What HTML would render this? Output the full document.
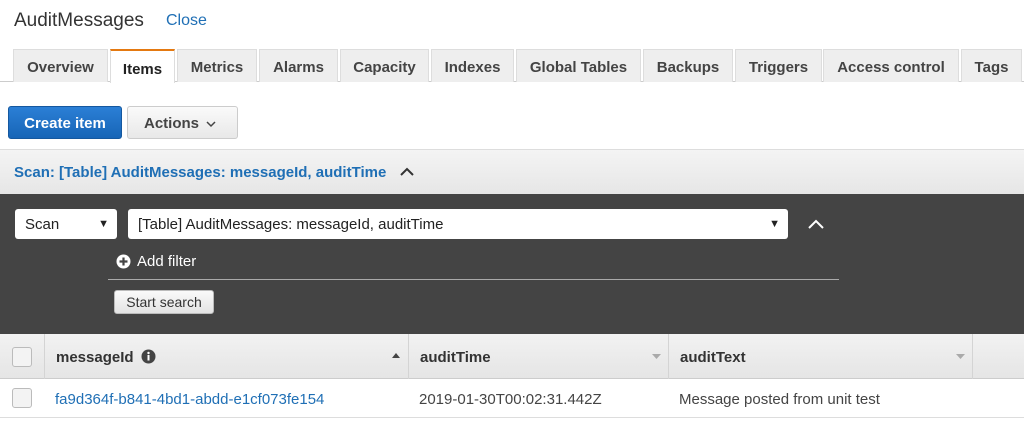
<!DOCTYPE html>
<html><head><style>
*{box-sizing:border-box;margin:0;padding:0}
body{width:1024px;height:440px;overflow:hidden;background:#fff;font-family:"Liberation Sans",Arial,sans-serif;position:relative;color:#333}
.a{position:absolute}
.tab{position:absolute;top:49px;height:33px;background:#eee;border:1px solid #ddd;border-bottom:none;font-weight:bold;font-size:15px;color:#444;text-align:center;line-height:35px}
.cb{position:absolute;width:20px;height:20px;border:1px solid #bbb;border-radius:3px;background:#f3f3f3}
</style></head><body>
<div class="a" style="left:14px;top:10px;font-size:19px;color:#333">AuditMessages</div>
<div class="a" style="left:166px;top:12px;font-size:16px;color:#1f6fb5">Close</div>
<div class="a" style="left:0;top:81px;width:1024px;height:1px;background:#ccc"></div>
<div class="tab" style="left:13px;width:95px">Overview</div>
<div class="tab" style="left:110px;width:65px;height:34px;background:#fff;border-top:2px solid #e47911;color:#222;line-height:37px">Items</div>
<div class="tab" style="left:177px;width:80px">Metrics</div>
<div class="tab" style="left:259px;width:79px">Alarms</div>
<div class="tab" style="left:340px;width:89px">Capacity</div>
<div class="tab" style="left:431px;width:83px">Indexes</div>
<div class="tab" style="left:516px;width:125px">Global Tables</div>
<div class="tab" style="left:643px;width:90px">Backups</div>
<div class="tab" style="left:735px;width:87px">Triggers</div>
<div class="tab" style="left:823px;width:136px">Access control</div>
<div class="tab" style="left:961px;width:61px">Tags</div>

<div class="a" style="left:8px;top:106px;width:114px;height:33px;background:linear-gradient(#2b7fd6,#1765b7);border:1px solid #15589f;border-radius:3px;color:#fff;font-weight:bold;font-size:15px;text-align:center;line-height:33px">Create item</div>
<div class="a" style="left:127px;top:106px;width:111px;height:33px;background:linear-gradient(#fafafa,#e8e8e8);border:1px solid #ccc;border-radius:3px;color:#444;font-weight:bold;font-size:15px;line-height:33px;padding-left:16px">Actions</div>
<svg class="a" style="left:206px;top:121px" width="10" height="7"><path d="M1 1 L5 5 L9 1" stroke="#444" stroke-width="1.5" fill="none"/></svg>

<div class="a" style="left:0;top:149px;width:1024px;height:45px;background:linear-gradient(#f4f4f4,#e6e6e6);border-top:1px solid #ddd"></div>
<div class="a" style="left:14px;top:164px;font-size:15px;font-weight:bold;color:#1f6fb5">Scan: [Table] AuditMessages: messageId, auditTime</div>
<svg class="a" style="left:399px;top:167px" width="16" height="10"><path d="M2 8 L8 2 L14 8" stroke="#333" stroke-width="2" fill="none"/></svg>

<div class="a" style="left:0;top:194px;width:1024px;height:140px;background:#444"></div>
<div class="a" style="left:15px;top:209px;width:102px;height:30px;background:#fff;border-radius:3px;font-size:15px;line-height:31px;padding-left:10px;color:#222">Scan<span style="position:absolute;right:8px;font-size:11px">&#9660;</span></div>
<div class="a" style="left:128px;top:209px;width:660px;height:30px;background:#fff;border-radius:3px;font-size:15px;line-height:31px;padding-left:10px;color:#222">[Table] AuditMessages: messageId, auditTime<span style="position:absolute;right:8px;font-size:11px">&#9660;</span></div>
<svg class="a" style="left:807px;top:219px" width="18" height="11"><path d="M2 9 L9 2 L16 9" stroke="#fff" stroke-width="2" fill="none"/></svg>
<svg class="a" style="left:116px;top:254px" width="15" height="15"><circle cx="7.5" cy="7.5" r="7" fill="#fff"/><path d="M7.5 3.5V11.5M3.5 7.5H11.5" stroke="#444" stroke-width="2.2"/></svg>
<div class="a" style="left:137px;top:253px;font-size:15px;color:#fff">Add filter</div>
<div class="a" style="left:108px;top:279px;width:731px;height:1px;background:#aaa"></div>
<div class="a" style="left:114px;top:290px;width:100px;height:24px;background:linear-gradient(#fafafa,#e4e4e4);border:1px solid #bbb;border-radius:3px;font-size:14px;line-height:23px;text-align:center;color:#333">Start search</div>

<div class="a" style="left:0;top:334px;width:1024px;height:45px;background:linear-gradient(#f2f2f2,#e5e5e5);border-bottom:1px solid #ccc"></div>
<div class="a" style="left:44px;top:334px;width:1px;height:45px;background:#d4d4d4"></div>
<div class="a" style="left:408px;top:334px;width:1px;height:45px;background:#d4d4d4"></div>
<div class="a" style="left:668px;top:334px;width:1px;height:45px;background:#d4d4d4"></div>
<div class="a" style="left:972px;top:334px;width:1px;height:45px;background:#d4d4d4"></div>
<div class="cb" style="left:12px;top:347px"></div>
<div class="a" style="left:56px;top:349px;font-size:15px;font-weight:bold;color:#333">messageId</div>
<svg class="a" style="left:141px;top:349px" width="15" height="15"><circle cx="7.5" cy="7.5" r="7" fill="#444"/><rect x="6.5" y="6" width="2" height="5.5" fill="#fff"/><circle cx="7.5" cy="4" r="1.2" fill="#fff"/></svg>
<svg class="a" style="left:392px;top:353px" width="8" height="5"><path d="M0 5 L4 0 L8 5Z" fill="#444"/></svg>
<div class="a" style="left:420px;top:349px;font-size:15px;font-weight:bold;color:#333">auditTime</div>
<svg class="a" style="left:652px;top:354px" width="9" height="5"><path d="M0 0 L4.5 5 L9 0Z" fill="#aaa"/></svg>
<div class="a" style="left:680px;top:349px;font-size:15px;font-weight:bold;color:#333">auditText</div>
<svg class="a" style="left:956px;top:354px" width="9" height="5"><path d="M0 0 L4.5 5 L9 0Z" fill="#aaa"/></svg>

<div class="cb" style="left:12px;top:388px"></div>
<div class="a" style="left:55px;top:391px;font-size:15px;color:#1f6fb5">fa9d364f-b841-4bd1-abdd-e1cf073fe154</div>
<div class="a" style="left:419px;top:391px;font-size:15px;color:#444">2019-01-30T00:02:31.442Z</div>
<div class="a" style="left:679px;top:391px;font-size:15px;color:#444">Message posted from unit test</div>
<div class="a" style="left:0;top:417px;width:1024px;height:1px;background:#ddd"></div>
</body></html>
